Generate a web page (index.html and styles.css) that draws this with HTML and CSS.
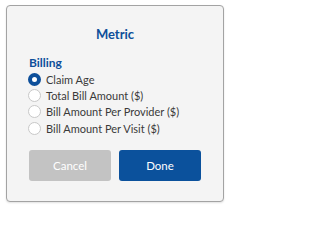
FILE: index.html
```html
<!DOCTYPE html>
<html>
<head>
<meta charset="utf-8">
<link rel="stylesheet" href="styles.css">
</head>
<body>
<div class="card">
  <div class="title">Metric</div>
  <div class="group">Billing</div>
  <div class="options">
    <label class="opt"><span class="radio checked"></span><span class="lbl">Claim Age</span></label>
    <label class="opt"><span class="radio"></span><span class="lbl">Total Bill Amount ($)</span></label>
    <label class="opt"><span class="radio"></span><span class="lbl">Bill Amount Per Provider ($)</span></label>
    <label class="opt"><span class="radio"></span><span class="lbl">Bill Amount Per Visit ($)</span></label>
  </div>
  <div class="actions">
    <button class="btn cancel">Cancel</button>
    <button class="btn done">Done</button>
  </div>
</div>
</body>
</html>
```
FILE: styles.css
```css
html, body {
  margin: 0;
  padding: 0;
  background: #ffffff;
}
body {
  font-family: Lato, "Open Sans", sans-serif;
  width: 231px;
  height: 212px;
  overflow: hidden;
}
.card {
  box-sizing: border-box;
  margin: 5px 0 0 6px;
  width: 218px;
  height: 197px;
  border: 1px solid #a3a3a3;
  border-radius: 4px;
  background: #f4f4f4;
  padding: 18px 22px 0 22px;
  box-shadow: 0 1px 2px rgba(0,0,0,0.12);
}
.title {
  text-align: center;
  font-weight: 700;
  font-size: 13px;
  line-height: 20px;
  color: #0d4f9a;
}
.group {
  margin-top: 11px;
  font-weight: 700;
  font-size: 12px;
  line-height: 16px;
  color: #0d4f9a;
}
.options {
  display: flex;
  flex-direction: column;
}
.opt {
  display: flex;
  align-items: center;
  height: 16.4px;
  font-size: 11px;
  color: #3a3a3a;
}
.radio {
  box-sizing: border-box;
  width: 13px;
  height: 13px;
  border-radius: 50%;
  border: 1px solid #c8c8c8;
  background: #ffffff;
  margin-right: 5px;
  margin-left: -1px;
  flex: none;
}
.radio.checked {
  border: 4px solid #0d4f9a;
  background: #ffffff;
}
.actions {
  display: flex;
  gap: 8px;
  margin-top: 13.5px;
}
.btn {
  flex: 1;
  height: 31px;
  border: none;
  border-radius: 3px;
  font-family: Lato, "Open Sans", sans-serif;
  font-size: 11.5px;
  color: #ffffff;
  padding: 0;
}
.cancel {
  background: #c3c3c3;
}
.done {
  background: #0b519c;
}
```
